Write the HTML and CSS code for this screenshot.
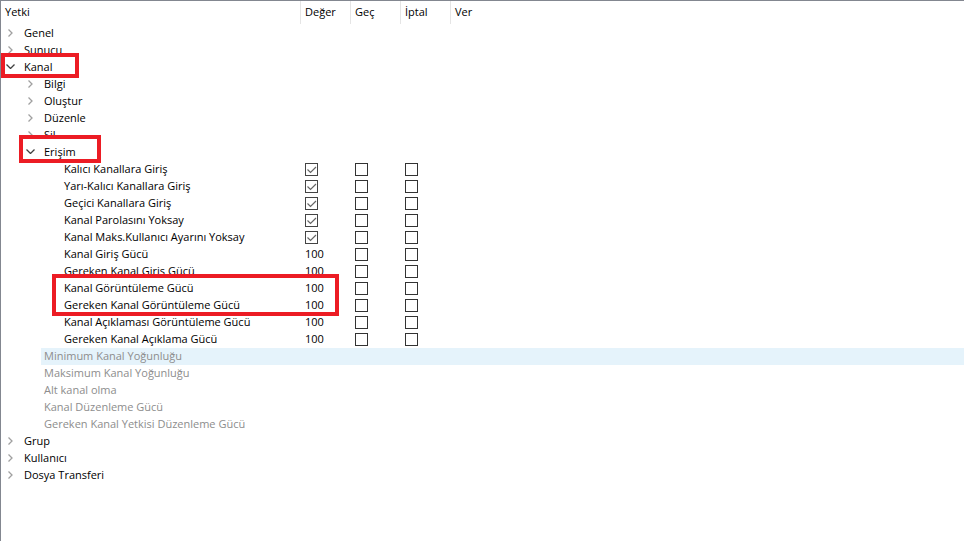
FILE: index.html
```html
<!DOCTYPE html>
<html lang="tr">
    <head>
        <meta charset="utf-8">
        <link rel="stylesheet" href="styles.css">
    </head>
    <body>
    <div class="tree">
        <div class="head">
            <div class="hc">Yetki</div>
            <div class="hc sep">Değer</div>
            <div class="hc sep">Geç</div>
            <div class="hc sep">İptal</div>
            <div class="hc sep">Ver</div>
        </div>

        <div class="row l0"><div class="name"><span class="arr"><svg width="5" height="8"><polyline points="0.5,0.5 4,4 0.5,7.5"/></svg></span><span class="txt">Genel</span></div></div>
        <div class="row l0"><div class="name"><span class="arr"><svg width="5" height="8"><polyline points="0.5,0.5 4,4 0.5,7.5"/></svg></span><span class="txt">Sunucu</span></div></div>
        <div class="row l0"><div class="name"><span class="arr open"><svg width="9" height="5"><polyline points="0.5,0.5 4.5,4.5 8.5,0.5"/></svg></span><span class="txt">Kanal</span></div></div>
        <div class="row l1"><div class="name"><span class="arr"><svg width="5" height="8"><polyline points="0.5,0.5 4,4 0.5,7.5"/></svg></span><span class="txt">Bilgi</span></div></div>
        <div class="row l1"><div class="name"><span class="arr"><svg width="5" height="8"><polyline points="0.5,0.5 4,4 0.5,7.5"/></svg></span><span class="txt">Oluştur</span></div></div>
        <div class="row l1"><div class="name"><span class="arr"><svg width="5" height="8"><polyline points="0.5,0.5 4,4 0.5,7.5"/></svg></span><span class="txt">Düzenle</span></div></div>
        <div class="row l1"><div class="name"><span class="arr"><svg width="5" height="8"><polyline points="0.5,0.5 4,4 0.5,7.5"/></svg></span><span class="txt">Sil</span></div></div>
        <div class="row l1"><div class="name"><span class="arr open"><svg width="9" height="5"><polyline points="0.5,0.5 4.5,4.5 8.5,0.5"/></svg></span><span class="txt">Erişim</span></div></div>

        <!-- Erişim -->
        <div class="row l2"><div class="name"><span class="arr"></span><span class="txt">Kalıcı Kanallara Giriş</span></div><div class="cell"><span class="cb on"><svg width="11" height="11"><polyline points="1.5,5.5 4.5,8.5 10,3"/></svg></span></div><div class="cell"><span class="cb"></span></div><div class="cell"><span class="cb"></span></div></div>
        <div class="row l2"><div class="name"><span class="arr"></span><span class="txt">Yarı-Kalıcı Kanallara Giriş</span></div><div class="cell"><span class="cb on"><svg width="11" height="11"><polyline points="1.5,5.5 4.5,8.5 10,3"/></svg></span></div><div class="cell"><span class="cb"></span></div><div class="cell"><span class="cb"></span></div></div>
        <div class="row l2"><div class="name"><span class="arr"></span><span class="txt">Geçici Kanallara Giriş</span></div><div class="cell"><span class="cb on"><svg width="11" height="11"><polyline points="1.5,5.5 4.5,8.5 10,3"/></svg></span></div><div class="cell"><span class="cb"></span></div><div class="cell"><span class="cb"></span></div></div>
        <div class="row l2"><div class="name"><span class="arr"></span><span class="txt">Kanal Parolasını Yoksay</span></div><div class="cell"><span class="cb on"><svg width="11" height="11"><polyline points="1.5,5.5 4.5,8.5 10,3"/></svg></span></div><div class="cell"><span class="cb"></span></div><div class="cell"><span class="cb"></span></div></div>
        <div class="row l2"><div class="name"><span class="arr"></span><span class="txt">Kanal Maks.Kullanıcı Ayarını Yoksay</span></div><div class="cell"><span class="cb on"><svg width="11" height="11"><polyline points="1.5,5.5 4.5,8.5 10,3"/></svg></span></div><div class="cell"><span class="cb"></span></div><div class="cell"><span class="cb"></span></div></div>
        <div class="row l2"><div class="name"><span class="arr"></span><span class="txt">Kanal Giriş Gücü</span></div><div class="cell">100</div><div class="cell"><span class="cb"></span></div><div class="cell"><span class="cb"></span></div></div>
        <div class="row l2"><div class="name"><span class="arr"></span><span class="txt">Gereken Kanal Giriş Gücü</span></div><div class="cell">100</div><div class="cell"><span class="cb"></span></div><div class="cell"><span class="cb"></span></div></div>
        <div class="row l2"><div class="name"><span class="arr"></span><span class="txt">Kanal Görüntüleme Gücü</span></div><div class="cell">100</div><div class="cell"><span class="cb"></span></div><div class="cell"><span class="cb"></span></div></div>
        <div class="row l2"><div class="name"><span class="arr"></span><span class="txt">Gereken Kanal Görüntüleme Gücü</span></div><div class="cell">100</div><div class="cell"><span class="cb"></span></div><div class="cell"><span class="cb"></span></div></div>
        <div class="row l2"><div class="name"><span class="arr"></span><span class="txt">Kanal Açıklaması Görüntüleme Gücü</span></div><div class="cell">100</div><div class="cell"><span class="cb"></span></div><div class="cell"><span class="cb"></span></div></div>
        <div class="row l2"><div class="name"><span class="arr"></span><span class="txt">Gereken Kanal Açıklama Gücü</span></div><div class="cell">100</div><div class="cell"><span class="cb"></span></div><div class="cell"><span class="cb"></span></div></div>

        <!-- pasif -->
        <div class="row l1 off hl"><div class="name"><span class="arr"></span><span class="txt">Minimum Kanal Yoğunluğu</span></div></div>
        <div class="row l1 off"><div class="name"><span class="arr"></span><span class="txt">Maksimum Kanal Yoğunluğu</span></div></div>
        <div class="row l1 off"><div class="name"><span class="arr"></span><span class="txt">Alt kanal olma</span></div></div>
        <div class="row l1 off"><div class="name"><span class="arr"></span><span class="txt">Kanal Düzenleme Gücü</span></div></div>
        <div class="row l1 off"><div class="name"><span class="arr"></span><span class="txt">Gereken Kanal Yetkisi Düzenleme Gücü</span></div></div>

        <div class="row l0"><div class="name"><span class="arr"><svg width="5" height="8"><polyline points="0.5,0.5 4,4 0.5,7.5"/></svg></span><span class="txt">Grup</span></div></div>
        <div class="row l0"><div class="name"><span class="arr"><svg width="5" height="8"><polyline points="0.5,0.5 4,4 0.5,7.5"/></svg></span><span class="txt">Kullanıcı</span></div></div>
        <div class="row l0"><div class="name"><span class="arr"><svg width="5" height="8"><polyline points="0.5,0.5 4,4 0.5,7.5"/></svg></span><span class="txt">Dosya Transferi</span></div></div>

        <!-- işaretler -->
        <div class="mark m1"></div>
        <div class="mark m2"></div>
        <div class="mark m3"></div>
    </div>
    </body>
</html>
```

FILE: styles.css
```css
html,body{
    margin:0;
    padding:0;
    background:#fff;
}
body{
    font:11px "Open Sans", "Liberation Sans", Arial, sans-serif;
    color:#000;
}
.tree{
    position:relative;
    height:540px;
    border-top:1px solid #838790;
    border-left:1px solid #838790;
}
.head{
    display:grid;
    grid-template-columns:299px 50px 50px 50px 1fr;
    height:23px;
    margin-bottom:1px;
}
.hc{
    padding-left:4px;
    line-height:22px;
}
.hc.sep{
    border-left:1px solid #e5e5e5;
}
.row{
    display:grid;
    grid-template-columns:299px 50px 50px 50px 1fr;
    height:17px;
    line-height:15px;
}
.name{
    display:flex;
    align-items:center;
    white-space:nowrap;
    padding-bottom:2px;
}
.l1 .name{ padding-left:20px; }
.l2 .name{ padding-left:40px; }
.arr{
    width:19px;
    height:15px;
    display:flex;
    align-items:center;
    justify-content:center;
    flex:none;
}
.arr svg{
    display:block;
    fill:none;
    stroke:#a0a0a0;
    stroke-width:1.3;
}
.arr.open svg{
    stroke:#404040;
}
.txt{
    margin-left:4px;
}
.cell{
    padding-left:5px;
    padding-bottom:2px;
    display:flex;
    align-items:center;
}
.cb{
    width:11px;
    height:11px;
    border:1px solid #333;
    background:#fff;
    display:block;
    margin-top:2px;
}
.cb.on{
    border-color:#444;
}
.cb svg{
    display:block;
    fill:none;
    stroke:#666;
    stroke-width:1.2;
}
.off{
    color:#8d8d8d;
}
.hl{
    background:linear-gradient(to right, transparent 40px, #e5f3fb 40px);
}
.mark{
    position:absolute;
    border:4px solid #ec1c24;
}
.m1{
    left:0;
    top:52px;
    width:70px;
    height:17px;
}
.m2{
    left:18px;
    top:134px;
    width:74px;
    height:20px;
}
.m3{
    left:51px;
    top:273px;
    width:279px;
    height:34px;
}
```
